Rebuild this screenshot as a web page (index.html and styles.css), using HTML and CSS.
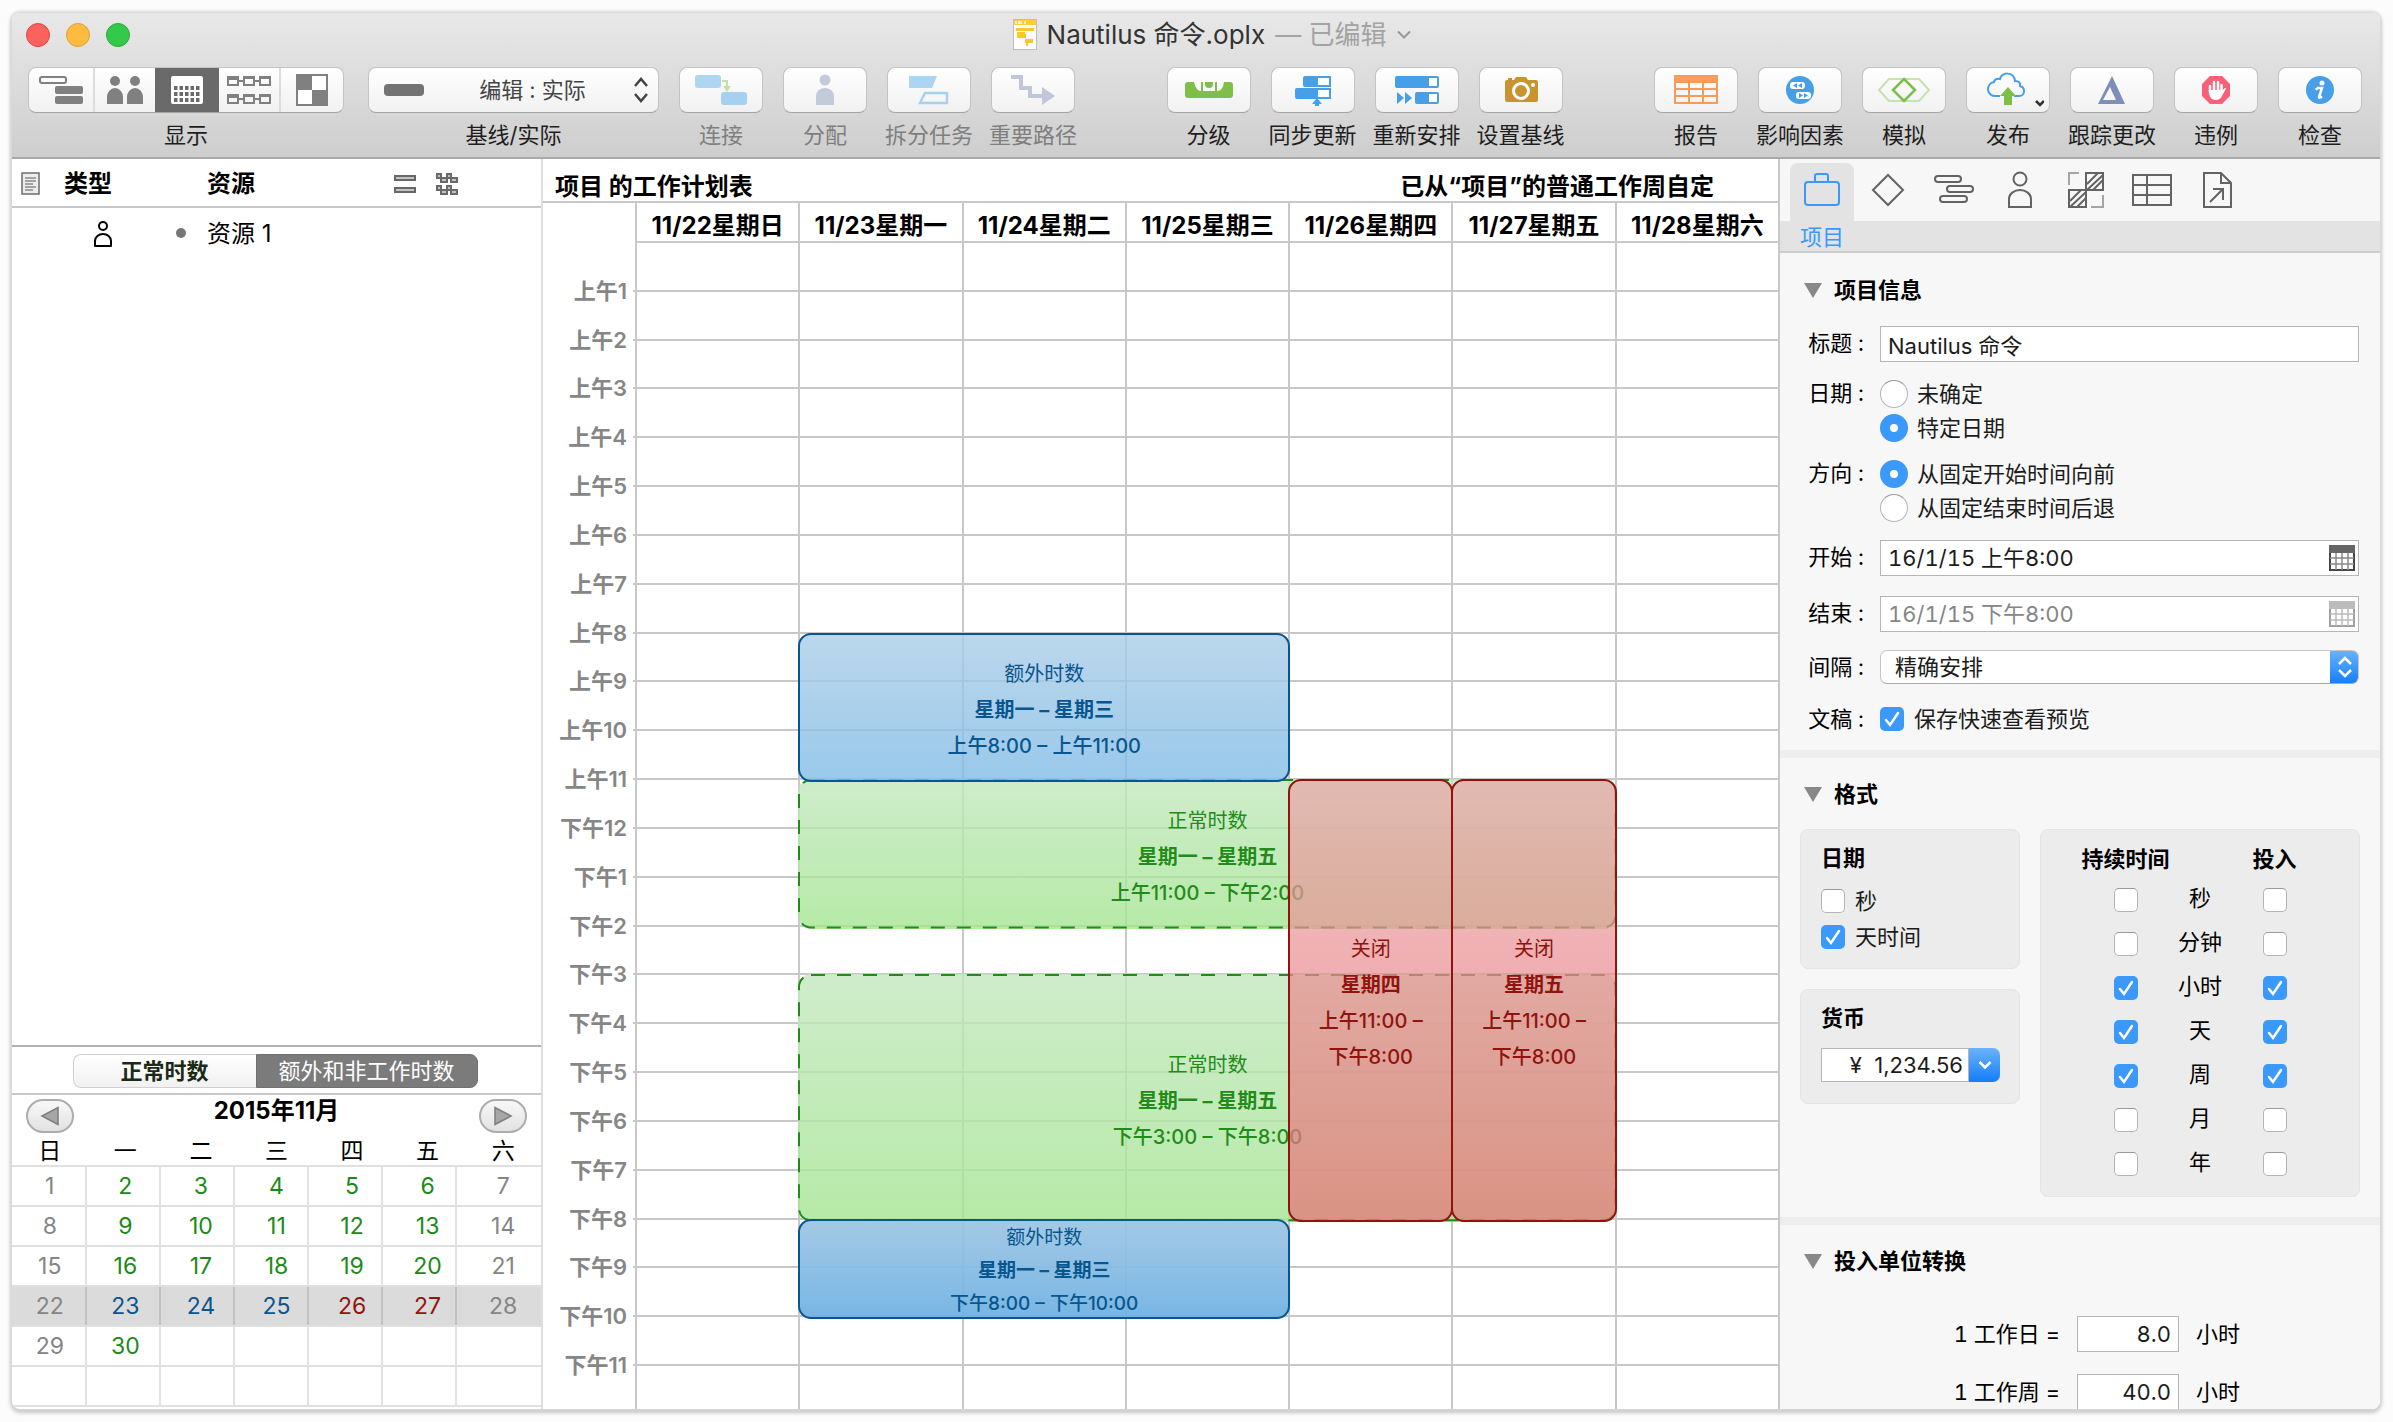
FILE: index.html
```html
<!DOCTYPE html>
<html lang="zh-CN">
<head>
<meta charset="utf-8">
<title>Nautilus 命令.oplx</title>
<link rel="stylesheet" href="styles.css">
</head>
<body>
<div class="window">
  <header class="chrome">
    <div class="titlebar">
      <div class="lights"><button class="light red" aria-label="关闭"></button><button class="light yellow" aria-label="最小化"></button><button class="light green" aria-label="缩放"></button></div>
      <h1 class="title">
        <svg width="24" height="32" viewBox="0 0 24 32"><rect x=".5" y=".5" width="23" height="30" fill="#fff" stroke="#bdbdbd"/><rect x="1" y="1" width="22" height="5" fill="#fc3"/><path d="M3 2v3M6 2v3M8 2v3M12 2v3" stroke="#fff" stroke-width="1.5"/><path d="M3 9h18v3H3zM4 13h8v2h1v4H4zM12 20h8v4h-5v3h-2v-3h-1z" fill="#fec52e"/></svg>
        <span>Nautilus 命令.oplx</span><span class="edited">— 已编辑</span>
        <svg class="title-chevron" width="16" height="10" viewBox="0 0 16 10"><path d="M2 1.5l6 6 6-6" fill="none" stroke="#9a9a9a" stroke-width="2"/></svg>
      </h1>
    </div>
    <div class="toolbar">
      <div class="tool views">
        <div class="segmented">
          <button aria-label="任务"><svg width="44" height="30" viewBox="0 0 44 30"><rect x="1" y="2" width="26" height="6" rx="2" fill="none" stroke="#808080" stroke-width="2"/><rect x="16" y="11" width="28" height="8" rx="2" fill="#808080"/><rect x="16" y="21" width="28" height="8" rx="2" fill="#808080"/></svg></button>
          <button aria-label="资源"><svg width="36" height="30" viewBox="0 0 36 30" fill="#808080"><circle cx="8" cy="6" r="5"/><circle cx="28" cy="6" r="5"/><path d="M0 29v-7a8 9 0 0 1 16 0v7zM20 29v-7a8 9 0 0 1 16 0v7z"/></svg></button>
          <button class="on" aria-label="日历"><svg width="32" height="30" viewBox="0 0 32 30"><rect y="1" width="32" height="28" rx="2" fill="#fff"/><path d="M3 13h26M3 19h26M3 25h26" stroke="#6a6a6a" stroke-width="4" stroke-dasharray="3.5 2"/></svg></button>
          <button aria-label="网络"><svg width="44" height="30" viewBox="0 0 44 30" fill="none" stroke="#808080" stroke-width="2"><path d="M1 2h10v8H1zM17 2h10v8H17zM33 2h10v8H33zM11 6h6M27 6h6M1 20h10v8H1zM17 20h10v8H17zM33 20h10v8H33zM11 24h6M27 24h6M1 4h10M17 3h10M33 3h10M1 22h10M17 21h10M33 21h10"/></svg></button>
          <button aria-label="样式"><svg width="32" height="32" viewBox="0 0 32 32"><rect x="1" y="1" width="30" height="30" fill="#fff" stroke="#808080" stroke-width="2"/><path d="M1 1h15v15H1zM16 16h15v15H16z" fill="#808080"/></svg></button>
        </div>
        <span>显示</span>
      </div>
      <div class="tool baseline">
        <select id="baseline"><option>编辑 : 实际</option></select>
        <label for="baseline">基线/实际</label>
      </div>
      <div class="group off">
        <div class="tool"><button id="t1" disabled><svg width="54" height="32" viewBox="0 0 54 32"><rect x="1" y="1" width="26" height="13" rx="3" fill="#aed6f3"/><rect x="27" y="18" width="26" height="13" rx="3" fill="#a6d0ef"/><path d="M28 7h5v8" fill="none" stroke="#c5e1a8" stroke-width="2"/><path d="M29 12h8l-4 6z" fill="#c5e1a8"/></svg></button><label for="t1">连接</label></div>
        <div class="tool"><button id="t2" disabled><svg width="20" height="32" viewBox="0 0 20 32" fill="#c3cbdb"><circle cx="10" cy="6" r="5.5"/><path d="M1 31V22a9 8 0 0 1 18 0v9z"/></svg></button><label for="t2">分配</label></div>
        <div class="tool"><button id="t3" disabled><svg width="42" height="32" viewBox="0 0 42 32"><path d="M1 2h28l-5 12H1z" fill="#aad5f3"/><path d="M17 19h22v10H12z" fill="none" stroke="#a6d0ef" stroke-width="2.5"/></svg></button><label for="t3">拆分任务</label></div>
        <div class="tool"><button id="t4" disabled><svg width="44" height="32" viewBox="0 0 44 32"><path d="M0 3h10v11h9v8h13" fill="none" stroke="#bfc7d8" stroke-width="4"/><path d="M31 13l13 9-13 9z" fill="#bfc7d8"/></svg></button><label for="t4">重要路径</label></div>
      </div>
      <div class="group">
        <div class="tool"><button id="t5"><svg width="48" height="32" viewBox="0 0 48 32"><path d="M3 8h6q2 9 7 9V8h2v9h12V8h2v9q6 0 7-9h6q3 0 3 3v10q0 3-3 3H3q-3 0-3-3V11q0-3 3-3z" fill="#7dbf49"/><path d="M20 8h8v2a4 4 0 0 1-8 0z" fill="#7dbf49"/></svg></button><label for="t5">分级</label></div>
        <div class="tool"><button id="t6"><svg width="36" height="32" viewBox="0 0 36 32" fill="#479fe8"><path d="M10 2h26v11H10q-2 0-2-2V4q0-2 2-2zM2 14h34v11H2q-2 0-2-2v-7q0-2 2-2z"/><path d="M23 4h11v7H23zM23 16h11v7H23z" fill="#fff"/><path d="M22 24l5 6h-3v2h-4v-2h-3z"/></svg></button><label for="t6">同步更新</label></div>
        <div class="tool"><button id="t7"><svg width="44" height="32" viewBox="0 0 44 32" fill="#479fe8"><rect y="2" width="44" height="12" rx="2"/><rect x="20" y="18" width="24" height="12" rx="2"/><path d="M34 4h8v8h-8zM34 20h8v8h-8z" fill="#fff"/><path d="M2 18l7 6-7 6zM10 18l7 6-7 6z"/></svg></button><label for="t7">重新安排</label></div>
        <div class="tool"><button id="t8"><svg width="34" height="32" viewBox="0 0 34 32"><path d="M3 6h7l2-3h10l2 3h8q2 0 2 2v18q0 2-2 2H3q-2 0-2-2V8q0-2 2-2zM4 4h4v3H4z" fill="#c7942f"/><circle cx="17" cy="17" r="7.5" fill="none" stroke="#fff" stroke-width="3"/><circle cx="29" cy="11" r="2" fill="#fff"/></svg></button><label for="t8">设置基线</label></div>
      </div>
      <div class="group">
        <div class="tool"><button id="t9"><svg width="44" height="32" viewBox="0 0 44 32"><path d="M1 2h42v5H1z" fill="#fa9f5e"/><path d="M1 2h42v27H1zM1 8h42M1 15h42M1 22h42M15 5v24M29 5v24" fill="none" stroke="#f79a5a" stroke-width="2"/></svg></button><label for="t9">报告</label></div>
        <div class="tool"><button id="t10"><svg width="30" height="32" viewBox="0 0 30 32"><circle cx="15" cy="16" r="14" fill="#479fe8"/><rect x="5" y="8" width="15" height="7" rx="3" fill="#fff"/><rect x="11" y="18" width="15" height="7" rx="3" fill="#fff"/><path d="M12 9v5l-4-2.500zM17 9v5l-4-2.500zM14 19v5l4-2.500zM19 19v5l4-2.500z" fill="#479fe8"/></svg></button><label for="t10">影响因素</label></div>
        <div class="tool"><button id="t11"><svg width="52" height="32" viewBox="0 0 52 32" fill="none"><path d="M11 5h30l10 11-10 11H11L1 16z" stroke="#c5e3b0" stroke-width="2"/><path d="M26 5l11 11-11 11-11-11z" stroke="#7dbf49" stroke-width="2.500"/></svg></button><label for="t11">模拟</label></div>
        <div class="tool"><button id="t12"><svg width="72" height="36" viewBox="-1 0 72 36"><path d="M27 24h-4a7 7 0 0 1-2-14q1-4 6-3c1-7 14-8 15 2q6 0 5 5c6 2 5 10-1 10h-5" fill="none" stroke="#479fe8" stroke-width="2"/><path d="M35 15l8 9h-4v9h-8v-9h-4z" fill="#7dbf49"/><path d="M63 29l4 4 4-4" fill="none" stroke="#333" stroke-width="2.500"/></svg></button><label for="t12">发布</label></div>
        <div class="tool"><button id="t13"><svg width="30" height="32" viewBox="0 0 30 32"><path fill-rule="evenodd" d="M15 2l13 28H1zM13 13L6 26h13z" fill="#7d8fb8"/></svg></button><label for="t13">跟踪更改</label></div>
        <div class="tool"><button id="t14"><svg width="30" height="32" viewBox="0 0 30 32"><path d="M9 2h12l8 8v12l-8 8H9l-8-8V10z" fill="#f8607a"/><path d="M9 12v7M13 8v9M17 8v9M20.500 11v8" stroke="#fff" stroke-width="2.500" stroke-linecap="round"/><path d="M7.800 16h14l2-2q1.500 0 1 1l-5 9q-2 2-5 2c-5 0-7-4-7-10z" fill="#fff"/></svg></button><label for="t14">违例</label></div>
        <div class="tool"><button id="t15"><svg width="30" height="32" viewBox="0 0 30 32"><circle cx="15" cy="16" r="14" fill="#479fe8"/><circle cx="17" cy="9" r="2.500" fill="#fff"/><path d="M12 14h5l-3 9q0 1.500 3-.5M10.500 15.500l3-1.500" fill="none" stroke="#fff" stroke-width="2.500"/></svg></button><label for="t15">检查</label></div>
      </div>
    </div>
  </header>

  <div class="panes">
    <aside class="sidebar">
      <table class="outline">
        <thead><tr>
          <th class="c-note"><svg width="20" height="24" viewBox="0 0 20 24"><path d="M1 1h17v21H1z" fill="#ececec" stroke="#6d6d6d" stroke-width="1.500"/><path d="M4 6h11M4 9h11M4 12h8M4 15h11M4 18h8" stroke="#8a8a8a" stroke-width="1.500"/></svg></th>
          <th class="c-type">类型</th>
          <th class="c-name">资源</th>
          <th class="c-icon"><svg width="22" height="18" viewBox="0 0 22 18" fill="#c4c4c4" stroke="#686868" stroke-width="2"><path d="M1 1h20v4H1zM1 13h20v4H1z"/></svg></th>
          <th class="c-last"><svg width="22" height="22" viewBox="0 0 22 22" fill="#c4c4c4" stroke="#686868" stroke-width="2"><path d="M1 1h4v4H1zM11 1h4v4h-4zM5 5h6v4H5zM15 5h6v4h-6zM1 13h4v4H1zM11 13h4v4h-4zM5 17h6v4H5zM15 17h6v4h-6z"/></svg></th>
        </tr></thead>
        <tbody><tr>
          <td colspan="2" class="person"><svg width="20" height="28" viewBox="0 0 20 28" fill="none" stroke="#000" stroke-width="2"><circle cx="10" cy="6" r="4"/><path d="M2 26v-5a8 7 0 0 1 16 0v5z" stroke-linejoin="round"/></svg></td>
          <td colspan="3" class="res">资源 1</td>
        </tr></tbody>
      </table>
      <section class="month">
        <div class="hours-kind"><button>正常时数</button><button class="on">额外和非工作时数</button></div>
        <div class="month-head">
          <button class="nav" aria-label="上个月"><svg width="20" height="20" viewBox="0 0 20 20"><path d="M18 1.500v17L2 10z" fill="#a6a6a6" stroke="#7d7d7d" stroke-width="1.500"/></svg></button>
          <h2>2015年11月</h2>
          <button class="nav" aria-label="下个月"><svg width="20" height="20" viewBox="0 0 20 20"><path d="M2 1.500v17L18 10z" fill="#a6a6a6" stroke="#7d7d7d" stroke-width="1.500"/></svg></button>
        </div>
        <table class="days-table">
          <thead><tr><th>日</th><th>一</th><th>二</th><th>三</th><th>四</th><th>五</th><th>六</th></tr></thead>
          <tbody>
            <tr><td>1</td><td class="w">2</td><td class="w">3</td><td class="w">4</td><td class="w">5</td><td class="w">6</td><td>7</td></tr>
            <tr><td>8</td><td class="w">9</td><td class="w">10</td><td class="w">11</td><td class="w">12</td><td class="w">13</td><td>14</td></tr>
            <tr><td>15</td><td class="w">16</td><td class="w">17</td><td class="w">18</td><td class="w">19</td><td class="w">20</td><td>21</td></tr>
            <tr class="current"><td>22</td><td class="x">23</td><td class="x">24</td><td class="x">25</td><td class="r">26</td><td class="r">27</td><td>28</td></tr>
            <tr><td>29</td><td class="w">30</td><td></td><td></td><td></td><td></td><td></td></tr>
            <tr><td></td><td></td><td></td><td></td><td></td><td></td><td></td></tr>
          </tbody>
        </table>
      </section>
    </aside>

    <main class="schedule">
      <div class="sched-title"><b>项目 的工作计划表</b><b>已从“项目”的普通工作周自定</b></div>
      <div class="day-heads"><span></span><b>11/22星期日</b><b>11/23星期一</b><b>11/24星期二</b><b>11/25星期三</b><b>11/26星期四</b><b>11/27星期五</b><b>11/28星期六</b></div>
      <div class="week-clip">
        <div class="week">
          <div class="hours">
            <div><span>上午1</span></div><div><span>上午2</span></div><div><span>上午3</span></div><div><span>上午4</span></div><div><span>上午5</span></div><div><span>上午6</span></div><div><span>上午7</span></div><div><span>上午8</span></div><div><span>上午9</span></div><div><span>上午10</span></div><div><span>上午11</span></div><div><span>下午12</span></div><div><span>下午1</span></div><div><span>下午2</span></div><div><span>下午3</span></div><div><span>下午4</span></div><div><span>下午5</span></div><div><span>下午6</span></div><div><span>下午7</span></div><div><span>下午8</span></div><div><span>下午9</span></div><div><span>下午10</span></div><div><span>下午11</span></div><div></div>
          </div>
          <div class="columns"><i></i><i></i><i></i><i></i><i></i><i></i><i></i></div>
          <div class="events">
            <article class="event regular e-mid"><svg class="dash"><rect x="1" y="1" rx="12"/></svg><p>正常时数</p><p><b>星期一 – 星期五</b></p><p class="time">上午11:00 – 下午2:00</p></article>
            <article class="event regular e-late"><svg class="dash"><rect x="1" y="1" rx="12"/></svg><p>正常时数</p><p><b>星期一 – 星期五</b></p><p class="time">下午3:00 – 下午8:00</p></article>
            <article class="event extra e-morning"><p>额外时数</p><p><b>星期一 – 星期三</b></p><p class="time">上午8:00 – 上午11:00</p></article>
            <article class="event extra deep e-night"><p>额外时数</p><p><b>星期一 – 星期三</b></p><p class="time">下午8:00 – 下午10:00</p></article>
            <article class="event closed e-thu"><p>关闭</p><p><b>星期四</b></p><p class="time">上午11:00 –<br>下午8:00</p></article>
            <article class="event closed e-fri"><p>关闭</p><p><b>星期五</b></p><p class="time">上午11:00 –<br>下午8:00</p></article>
          </div>
        </div>
      </div>
    </main>

    <aside class="inspector">
      <nav class="tabs">
        <button class="on" aria-label="项目"><svg width="38" height="34" viewBox="0 0 38 34" fill="none" stroke="#3b99fc" stroke-width="2"><rect x="2" y="9" width="34" height="23" rx="3"/><path d="M12 9V3q0-2 2-2h9q2 0 2 2v6"/></svg></button>
        <button aria-label="里程碑"><svg width="34" height="34" viewBox="0 0 34 34"><path d="M17 2l15 15-15 15L2 17z" fill="none" stroke="#636363" stroke-width="2"/></svg></button>
        <button aria-label="任务"><svg width="40" height="32" viewBox="0 0 40 32" fill="none" stroke="#636363" stroke-width="2"><rect x="1" y="2" width="26" height="6" rx="3"/><rect x="13" y="12" width="26" height="6" rx="3"/><rect x="6" y="22" width="27" height="6" rx="3"/></svg></button>
        <button aria-label="资源"><svg width="26" height="38" viewBox="0 0 26 38" fill="none" stroke="#636363" stroke-width="2"><circle cx="13" cy="8" r="6.500"/><path d="M2 36V28a11 9 0 0 1 22 0v8z"/></svg></button>
        <button aria-label="样式"><svg width="38" height="38" viewBox="0 0 38 38" fill="none" stroke="#636363" stroke-width="2"><path d="M19 2h17v17H19zM2 19h17v17H2zM20 13L31 2M20 19L36 4M26 19l10-10M3 30l11-11M3 36l16-15M10 36l9-9"/><path d="M2 14V2h10M36 24v12H24" stroke="#a5a5a5"/></svg></button>
        <button aria-label="表格"><svg width="42" height="34" viewBox="0 0 42 34" fill="none" stroke="#636363" stroke-width="2"><path d="M2 2h38v30H2zM2 12h38M2 22h38M16 2v30"/></svg></button>
        <button aria-label="附件"><svg width="30" height="38" viewBox="0 0 30 38" fill="none" stroke="#636363" stroke-width="2"><path d="M1 2h17l10 10v24H1zM18 2v10h10M7 31l13-13M10 18h10v11"/></svg></button>
      </nav>
      <h2 class="tab-name">项目</h2>
      <div class="inspector-body">
        <section class="info">
          <h3>项目信息</h3>
          <div class="form">
            <label for="f-title">标题 :</label>
            <input id="f-title" class="field" type="text" value="Nautilus 命令">
            <span class="lbl">日期 :</span>
            <div class="choices"><label><input type="radio" name="date">未确定</label><label><input type="radio" name="date" checked>特定日期</label></div>
            <span class="lbl">方向 :</span>
            <div class="choices"><label><input type="radio" name="dir" checked>从固定开始时间向前</label><label><input type="radio" name="dir">从固定结束时间后退</label></div>
            <label for="f-start">开始 :</label>
            <div class="datefield"><input id="f-start" type="text" value="16/1/15 上午8:00"><button aria-label="选择日期"><svg width="26" height="26" viewBox="0 0 26 26"><path d="M1 1h24v24H1z" fill="#fff" stroke="#444" stroke-width="2"/><path d="M0 0h26v8H0z" fill="#666"/><path d="M1 13h24M1 19h24M7 8v17M13 8v17M19 8v17" stroke="#8a8a8a" stroke-width="1.500"/></svg></button></div>
            <label for="f-end">结束 :</label>
            <div class="datefield off"><input id="f-end" type="text" value="16/1/15 下午8:00" disabled><button disabled aria-label="选择日期"><svg width="26" height="26" viewBox="0 0 26 26"><path d="M1 1h24v24H1z" fill="#fff" stroke="#a0a0a0" stroke-width="2"/><path d="M0 0h26v8H0z" fill="#bcbcbc"/><path d="M1 13h24M1 19h24M7 8v17M13 8v17M19 8v17" stroke="#bbb" stroke-width="1.500"/></svg></button></div>
            <label for="f-gap">间隔 :</label>
            <select id="f-gap" class="popup"><option>精确安排</option></select>
            <span class="lbl">文稿 :</span>
            <label class="check"><input type="checkbox" checked>保存快速查看预览</label>
          </div>
        </section>
        <section class="format">
          <h3>格式</h3>
          <div class="boxes">
            <div class="left-boxes">
              <div class="box"><h4>日期</h4><label class="check"><input type="checkbox">秒</label><label class="check"><input type="checkbox" checked>天时间</label></div>
              <div class="box"><h4><label for="cur">货币</label></h4><div class="combo"><input id="cur" type="text" value="¥  1,234.56"><button aria-label="展开"><svg width="14" height="10" viewBox="0 0 14 10"><path d="M1.500 2l5.500 5.500L12.500 2" fill="none" stroke="#fff" stroke-width="2.500"/></svg></button></div></div>
            </div>
            <table class="box units">
              <thead><tr><th>持续时间</th><th class="unit"></th><th>投入</th></tr></thead>
              <tbody>
                <tr><td><input type="checkbox" aria-label="持续时间 秒"></td><td>秒</td><td><input type="checkbox" aria-label="投入 秒"></td></tr>
                <tr><td><input type="checkbox" aria-label="持续时间 分钟"></td><td>分钟</td><td><input type="checkbox" aria-label="投入 分钟"></td></tr>
                <tr><td><input type="checkbox" checked aria-label="持续时间 小时"></td><td>小时</td><td><input type="checkbox" checked aria-label="投入 小时"></td></tr>
                <tr><td><input type="checkbox" checked aria-label="持续时间 天"></td><td>天</td><td><input type="checkbox" checked aria-label="投入 天"></td></tr>
                <tr><td><input type="checkbox" checked aria-label="持续时间 周"></td><td>周</td><td><input type="checkbox" checked aria-label="投入 周"></td></tr>
                <tr><td><input type="checkbox" aria-label="持续时间 月"></td><td>月</td><td><input type="checkbox" aria-label="投入 月"></td></tr>
                <tr><td><input type="checkbox" aria-label="持续时间 年"></td><td>年</td><td><input type="checkbox" aria-label="投入 年"></td></tr>
              </tbody>
            </table>
          </div>
        </section>
        <section class="convert">
          <h3>投入单位转换</h3>
          <div class="conv"><label for="c-day">1 工作日 =</label><input id="c-day" class="field" type="text" value="8.0"><span>小时</span></div>
          <div class="conv"><label for="c-week">1 工作周 =</label><input id="c-week" class="field" type="text" value="40.0"><span>小时</span></div>
        </section>
      </div>
    </aside>
  </div>
</div>
</body>
</html>
```

FILE: styles.css
```css
* { box-sizing: border-box; }
body {
  margin: 0;
  height: 100vh;
  padding: 13px 13px 13px 12px;
  background: #fcfcfc;
  font: 22px/26px "Inter", "Noto Sans CJK SC", sans-serif;
  color: #000;
  overflow: hidden;
}
h1, h2, h3, h4, p { margin: 0; font-size: inherit; font-weight: inherit; }
button, input, select { font: inherit; color: inherit; margin: 0; padding: 0; border: 0; border-radius: 0; background: none; }
svg { display: block; flex: none; }
table { border-collapse: collapse; }
th, td { padding: 0; }

.window {
  height: 100%;
  display: flex;
  flex-direction: column;
  overflow: hidden;
  border-radius: 8px;
  background: #fff;
  box-shadow: 0 0 3px 2px #d8d8d8, 0 3px 5px #b0b0b0;
}

/* title bar and toolbar */
.chrome {
  flex: none;
  height: 146px;
  border-bottom: 2px solid #a9a9a9;
  background: linear-gradient(#e8e8e8, #cecece);
}
.titlebar { display: flex; align-items: center; height: 44px; padding: 0 85px 0 14px; }
.lights { display: flex; gap: 16px; }
.light { width: 24px; height: 24px; border-radius: 50%; }
.light.red { background: #fc625d; border: 1px solid #e0443e; }
.light.yellow { background: #fdbc40; border: 1px solid #dea034; }
.light.green { background: #35c94b; border: 1px solid #27aa35; }
.title { flex: 1; display: flex; justify-content: center; align-items: center; gap: 10px; font-size: 26px; color: #333; }
.edited { color: #a3a3a3; }
.toolbar { display: flex; padding: 10px 18px 0 16px; color: #1e1e1e; }
.tool { display: flex; flex-direction: column; align-items: center; gap: 9px; width: 84px; white-space: nowrap; }
.tool > button {
  display: flex; align-items: center; justify-content: center;
  width: 84px; height: 46px;
  border: 1px solid #c3c3c3; border-bottom-color: #a5a5a5; border-radius: 8px;
  background: linear-gradient(#fff, #f1f1f1);
}
.group { display: flex; gap: 20px; }
.group + .group { margin-left: auto; }
.group.off { margin-left: 20px; color: #7f7f7f; }
.views { width: auto; }
.segmented { display: flex; height: 46px; border: 1px solid #c3c3c3; border-bottom-color: #a5a5a5; border-radius: 8px; overflow: hidden; background: linear-gradient(#fff, #f1f1f1); }
.segmented button { display: flex; align-items: center; justify-content: center; width: 62px; border-left: 2px solid #dcdcdc; }
.segmented button:first-child { width: 64px; border-left: 0; }
.segmented button:last-child { width: 64px; }
.segmented .on { background: #6a6a6a; border-color: #6a6a6a; }
.segmented .on + button { border-color: #6a6a6a; }
.baseline { width: 291px; margin-left: 24px; }
.baseline select {
  appearance: none;
  width: 100%; height: 46px; padding: 0 22px 0 60px;
  border: 1px solid #c3c3c3; border-bottom-color: #a5a5a5; border-radius: 8px;
  color: #444; text-align: center; text-align-last: center;
  background:
    url("data:image/svg+xml,%3Csvg xmlns='http://www.w3.org/2000/svg' width='40' height='12'%3E%3Crect width='40' height='12' rx='4' fill='%23737373'/%3E%3C/svg%3E") 15px center no-repeat,
    url("data:image/svg+xml,%3Csvg xmlns='http://www.w3.org/2000/svg' width='16' height='26'%3E%3Cpath d='M2 9l6-7 6 7M2 17l6 7 6-7' fill='none' stroke='%23444' stroke-width='2.5'/%3E%3C/svg%3E") right 9px center no-repeat,
    linear-gradient(#fff, #f1f1f1);
}

.panes { flex: 1; min-height: 0; display: flex; }

/* resource outline */
.sidebar { flex: none; width: 531px; display: flex; flex-direction: column; border-right: 2px solid #dfdfdf; }
.outline { width: 100%; table-layout: fixed; text-align: left; font-size: 24px; }
.outline th { height: 48px; padding-top: 3px; border-bottom: 2px solid #c8c8c8; }
.c-note { width: 52px; padding-left: 9px; }
.c-type { width: 143px; }
.c-name { width: 187px; }
.c-icon { width: 42px; }
.outline td { height: 52px; }
.person svg { margin-left: 81px; }
.res::before { content: ""; display: inline-block; width: 10px; height: 10px; margin: 0 21px 4px -31px; border-radius: 50%; background: #777; }

/* month picker */
.month { margin-top: auto; padding-bottom: 2px; border-top: 2px solid #b3b3b3; }
.hours-kind { display: flex; justify-content: center; height: 48px; padding: 7px 3px 5px 0; border-bottom: 2px solid #c8c8c8; }
.hours-kind button { width: 183px; border: 1px solid #d0d0d0; border-right: 0; border-radius: 8px 0 0 8px; background: linear-gradient(#fff, #f1f1f1); font-weight: 700; color: #1a2a14; }
.hours-kind .on { width: 222px; border: 1px solid #707070; border-radius: 0 8px 8px 0; background: #7b7b7b; font-weight: 400; color: #fff; }
.month-head { display: flex; justify-content: space-between; height: 41px; padding: 4px 14px 0; font-size: 24px; line-height: 24px; }
.month-head h2 { font-weight: 700; }
.nav { display: flex; align-items: center; justify-content: center; width: 48px; height: 34px; border: 2px solid #adadad; border-radius: 17px; background: linear-gradient(#f8f8f8, #e2e2e2); }
.days-table { width: 100%; table-layout: fixed; border-bottom: 2px solid #e0e0e0; text-align: center; font-size: 23px; color: #858585; }
.days-table th { height: 30px; font-weight: 400; color: #000; }
.days-table tbody { background: repeating-linear-gradient(to right, transparent 0 72px, #e2e2e2 72px 74px) 1px 0 / 445px 100% no-repeat; }
.days-table td { height: 40px; border-top: 2px solid #e0e0e0; }
.current { background: rgba(0, 0, 0, .14); }
.w { color: #1c8a17; }
.x { color: #0b568f; }
.r { color: #94140f; }

/* week schedule */
.schedule { flex: 1; min-width: 0; display: flex; flex-direction: column; border-right: 2px solid #c8c8c8; }
.sched-title { display: flex; justify-content: space-between; flex: none; height: 44px; padding: 15px 64px 0 12px; border-bottom: 2px solid #c8c8c8; font-size: 24px; }
.day-heads { display: grid; grid-template-columns: 92px repeat(7, 1fr); flex: none; height: 40px; font-size: 24px; line-height: 30px; text-align: center; }
.day-heads b { padding-top: 8px; border-left: 2px solid #c8c8c8; border-bottom: 2px solid #c8c8c8; white-space: nowrap; }
.week-clip { flex: 1; min-height: 0; overflow: hidden; }
.week { display: grid; height: 1172px; }
.hours, .columns, .events { grid-area: 1 / 1; display: grid; min-height: 0; }
.hours { grid-template-rows: repeat(24, 1fr); }
.hours div { display: grid; grid-template-columns: 84px; align-items: end; border-bottom: 2px solid transparent; border-image: linear-gradient(to right, transparent 92px, #c8c8c8 92px) 2; border-image-width: 0 0 2px 0; min-height: 0; }
.hours span { margin-bottom: -14px; text-align: right; font-weight: 600; color: #868686; }
.columns, .events { grid-template-columns: repeat(7, 1fr); margin-left: 92px; }
.columns i { border-left: 2px solid #c8c8c8; }
.events { grid-template-rows: repeat(24, 1fr); }
.event { position: relative; display: flex; flex-direction: column; justify-content: center; min-height: 0; margin: -1px -2px -2px 0; padding-top: 6px; border: 2px solid; border-radius: 13px; text-align: center; font-size: 20px; line-height: 36px; white-space: nowrap; }
.time { font-weight: 500; }
.extra { color: #07568f; background: linear-gradient(rgba(172, 205, 231, .8), rgba(127, 187, 229, .8)) border-box; }
.deep { font-size: 19px; line-height: 33px; padding-top: 2px; background: linear-gradient(rgba(158, 197, 227, .93), rgba(109, 176, 226, .93)) border-box; }
.regular { color: #238b1a; border-color: transparent; background: linear-gradient(rgba(195, 231, 190, .8), rgba(164, 229, 146, .8)) border-box; }
.closed { color: #90130d; background: linear-gradient(rgba(233, 165, 167, .7), rgba(233, 110, 117, .7)) border-box; }
.dash { position: absolute; inset: -2px; width: calc(100% + 4px); height: calc(100% + 4px); }
.dash rect { width: calc(100% - 2px); height: calc(100% - 2px); fill: none; stroke: #238b1a; stroke-width: 2; stroke-dasharray: 14 12; }
.e-morning { grid-area: 9 / 2 / 12 / 5; }
.e-mid { grid-area: 12 / 2 / 15 / 7; }
.e-late { grid-area: 16 / 2 / 21 / 7; }
.e-night { grid-area: 21 / 2 / 23 / 5; }
.e-thu { grid-area: 12 / 5 / 21 / 6; }
.e-fri { grid-area: 12 / 6 / 21 / 7; }

/* inspector */
.inspector { flex: none; width: 600px; display: flex; flex-direction: column; background: #f7f7f7; }
.tabs { display: flex; gap: 2px; height: 62px; padding: 4px 10px 0; flex: none; }
.tabs button { display: flex; align-items: center; justify-content: center; width: 64px; padding-bottom: 5px; border-radius: 8px 8px 0 0; }
.tabs .on { background: #e3e3e3; }
.tab-name { flex: none; height: 32px; padding: 3px 20px 0; border-bottom: 2px solid #cdcdcd; background: #e3e3e3; color: #3b99fc; }
.inspector-body { flex: 1; min-height: 0; overflow: hidden; }
.inspector section { padding: 21px 20px 20px; border-bottom: 8px solid #eee; }
.inspector .info { padding: 22px 21px 14px 20px; }
.inspector h3 { display: flex; align-items: center; gap: 12px; padding-left: 4px; font-weight: 700; line-height: 30px; }
.inspector h3::before { content: ""; border: solid transparent; border-width: 15px 9px 0; border-top-color: #888; }
.form { display: grid; grid-template-columns: 64px 1fr; column-gap: 16px; margin-top: 21px; align-items: start; color: #1c1c1c; font-variant-numeric: tabular-nums; }
.form > label:not(.check), .lbl { text-align: right; line-height: 34px; color: #000; white-space: nowrap; }
.choices { margin-top: 1px; }
.form > .lbl:has(+ .choices) { line-height: 30px; }
.field, .datefield { height: 36px; padding: 0 7px; border: 1px solid #b6b6b6; background: #fff; color: #1c1c1c; }
.form .field { margin-bottom: 16px; width: 100%; }
.choices { display: flex; flex-direction: column; gap: 6px; margin-bottom: 17px; }
.choices label { display: flex; align-items: center; gap: 9px; height: 28px; padding-top: 1px; }
.choices + .lbl + .choices { margin-bottom: 19px; }
input[type=radio] { appearance: none; width: 28px; height: 28px; flex: none; border: 1px solid #b4b4b4; border-top-color: #999; border-radius: 50%; background: #fff; }
input[type=radio]:checked { border: 10px solid #3b99fc; }
.datefield { display: flex; align-items: center; padding-right: 3px; margin-bottom: 20px; }
.datefield input { flex: 1; min-width: 0; }
.datefield.off { margin-bottom: 18px; }
.datefield.off input { color: #868686; }
.popup {
  appearance: none; width: 100%; height: 34px; padding-left: 14px; margin-bottom: 18px;
  border: 1px solid #c6c6c6; border-bottom-color: #aaa; border-radius: 7px;
  background: url("data:image/svg+xml,%3Csvg xmlns='http://www.w3.org/2000/svg' width='29' height='34'%3E%3Cdefs%3E%3ClinearGradient id='g' x2='0' y2='1'%3E%3Cstop stop-color='%236bb3fa'/%3E%3Cstop offset='1' stop-color='%23147efb'/%3E%3C/linearGradient%3E%3C/defs%3E%3Cpath d='M0 0h22q7 0 7 7v20q0 7-7 7H0z' fill='url(%23g)'/%3E%3Cpath d='M9 14l6-6 6 6M9 20l6 6 6-6' fill='none' stroke='%23fff' stroke-width='2.5'/%3E%3C/svg%3E") right / 29px 34px no-repeat border-box #fff;
}
.check { display: flex; align-items: center; gap: 10px; height: 36px; color: #1c1c1c; }
.form .check { height: 34px; }
input[type=checkbox] { appearance: none; display: block; flex: none; width: 24px; height: 24px; border: 1px solid #b4b4b4; border-top-color: #999; border-radius: 5px; background: #fff; }
input[type=checkbox]:checked { border: 0; background: #3b99fc url("data:image/svg+xml,%3Csvg xmlns='http://www.w3.org/2000/svg' width='24' height='24'%3E%3Cpath d='M6 13l4 5 8-12' fill='none' stroke='%23fff' stroke-width='2.5' stroke-linecap='round'/%3E%3C/svg%3E"); }
.boxes { display: flex; align-items: flex-start; gap: 20px; margin-top: 20px; }
.left-boxes { flex: none; width: 220px; display: flex; flex-direction: column; gap: 20px; }
.box { border: 1px solid #e4e4e4; border-radius: 8px; background: #ececec; }
div.box { padding: 15px 20px; height: 140px; }
div.box + div.box { height: 115px; }
.box h4 { font-weight: 700; }
div.box h4 { margin-bottom: 12px; }
div.box + div.box h4 { margin-bottom: 17px; }
.combo { display: flex; width: 179px; height: 34px; }
.combo input { flex: 1; min-width: 0; padding-right: 5px; border: 1px solid #b6b6b6; background: #fff; text-align: right; white-space: pre; color: #1c1c1c; }
.combo button { display: flex; align-items: center; justify-content: center; width: 31px; border-radius: 0 7px 7px 0; background: linear-gradient(#6bb3fa, #147efb); }
.units { width: 100%; min-width: 0; border-collapse: separate; border-spacing: 0; table-layout: fixed; padding: 0 37px 10px; text-align: center; }
.units th { height: 48px; padding-top: 10px; font-weight: 700; white-space: nowrap; }
.units td { height: 44px; vertical-align: middle; }
.units td:nth-child(2) { padding-bottom: 4px; }
.units .unit { width: 54px; }
.units input { margin: 0 auto; }
.inspector .convert { border: 0; }
.conv { display: grid; grid-template-columns: 260px 102px 1fr; column-gap: 17px; align-items: center; margin-bottom: 22px; font-variant-numeric: tabular-nums; }
.conv label { text-align: right; white-space: nowrap; }
.conv .field { width: 100%; text-align: right; }
h3 + .conv { margin-top: 40px; }
```
